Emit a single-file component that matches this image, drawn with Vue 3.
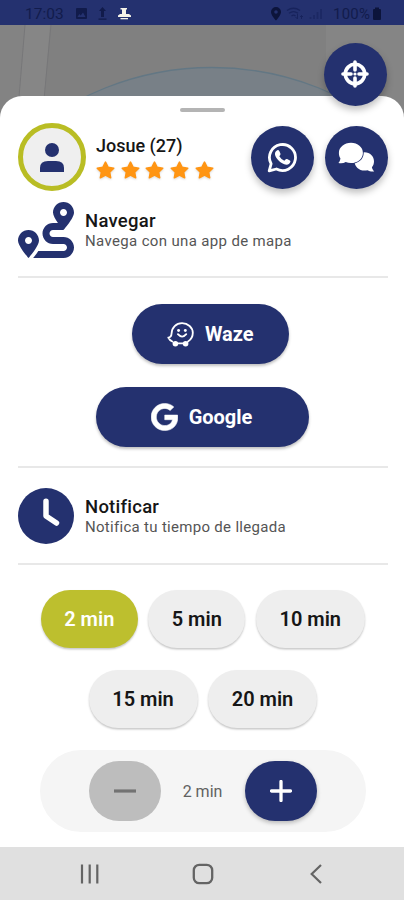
<script setup>
import { ref } from 'vue'

const presets = [[2, 5, 10], [15, 20]]
const minutes = ref(2)
</script>

<template>
  <div class="screen">
    <header class="status">
      <span class="time">17:03</span>
      <svg class="st-left" width="60" height="16" viewBox="0 0 60 16">
        <path fill="#111b4b" fill-rule="evenodd" d="M2 2h9q1 0 1 1v9q0 1-1 1H2q-1 0-1-1V3q0-1 1-1zM2.500 11h8L8 6.500 5.700 9.500 4.300 8z" />
        <path fill="#111b4b" d="M27.500 1l3.500 4h-2v6h-3V5h-2zM23.500 12.500h8v1.200h-8z" />
        <path fill="#f5f3e8" d="M45.500 2h6.500v1.500h-1V8h3l2 1.500v1.500H43V9.500L45 8h2V3.500h-1.500z" />
        <path fill="#f5f3e8" d="M45.500 12h7.500v1.300h-7.500z" />
      </svg>
      <span class="grow"></span>
      <svg class="st-right" width="56" height="16" viewBox="0 0 56 16">
        <path fill="#0c143b" fill-rule="evenodd" d="M6 1a5 5 0 0 1 5 5c0 3.500-5 8.500-5 8.500S1 9.500 1 6a5 5 0 0 1 5-5zm0 3.200a1.800 1.800 0 1 0 0 3.600 1.800 1.800 0 0 0 0-3.600z" />
        <g fill="none" stroke="#17235c" stroke-width="1.300">
          <path d="M17 4.500Q23.500 0 30 4.500M19 7.300q4.500-3.300 9 0M21.500 10q2-1.600 4 0" />
          <path d="M27.500 8v5M25.500 11l2 2M31.500 13V9.500M30 11l1.500-1.500L33 11" stroke-width="1" />
          <path d="M40.500 13v-2M44 13V9M47.500 13V6M51 13V3" stroke-width="1.800" opacity=".6" />
        </g>
      </svg>
      <span class="percent">100%</span>
      <svg class="battery" width="10" height="14" viewBox="0 0 10 14"><path fill="#0c143b" d="M3 .5h4v1.500h1q1 0 1 1V12q0 1-1 1H2q-1 0-1-1V3q0-1 1-1h1z" /></svg>
    </header>

    <div class="map">
      <svg width="404" height="96" viewBox="0 0 404 96">
        <path fill="#838383" d="M0 0h25L16 96H0z" />
        <path fill="#858585" d="M326 0h78v96h-78z" />
        <path fill="#868686" d="M25 0h25L42 96H16z" />
        <path fill="none" stroke="#777779" d="M25 0l-8 96M51 0l-9 96" />
        <circle cx="212" cy="331" r="288.500" fill="#788087" stroke="#637784" stroke-width="1.300" />
      </svg>
      <button class="round locate" aria-label="Centrar">
        <svg width="28" height="28" viewBox="0 0 28 28" fill="none" stroke="#fff">
          <circle cx="14" cy="14" r="9.700" stroke-width="3.600" />
          <path d="M14 2v8M14 18V26M2 14h8M18 14H26" stroke-width="3.600" stroke-linecap="round" />
          <circle cx="14" cy="14" r="1.600" fill="#fff" stroke="none" />
        </svg>
      </button>
    </div>

    <main class="sheet">
      <div class="handle"></div>

      <section class="profile">
        <div class="avatar">
          <svg width="24" height="29" viewBox="0 0 24 29" fill="#24316f">
            <circle cx="12" cy="7" r="7" />
            <path d="M0 29v-4q0-7 8-7h8q8 0 8 7v4z" />
          </svg>
        </div>
        <div class="who">
          <div class="name">Josue (27)</div>
          <div class="stars">
            <svg v-for="n in 5" :key="n" width="19" height="19" viewBox="0 0 24 24">
              <path fill="#ff9513" stroke="#ff9513" stroke-width="2" stroke-linejoin="round" d="M12 1.500l3.300 6.500 7.100 1.100-5.200 5 1.300 7.100L12 17.800l-6.500 3.400 1.300-7.100-5.200-5L8.700 8z" />
            </svg>
          </div>
        </div>
        <button class="round" aria-label="WhatsApp">
          <svg width="31" height="31" viewBox="0 0 31 31">
            <path fill="none" stroke="#fff" stroke-width="2.800" stroke-linejoin="round" d="M2.200 28.800l1.900-7A13 13 0 1 1 9.400 27z" />
            <path fill="#fff" d="M9.300 9q1.300-1.200 2.300-.8.700.3 1.800 3.300.3.800-.2 1.500l-.9 1.300q1.800 3.100 5 4.400l1.500-1.500q.6-.5 1.300-.2l2.800 1.400q.7.400.5 1.100-.5 3-4 3.200-4.300-.2-8.300-4.600-3.900-4.500-3-7.400.3-1 1.200-1.700z" />
          </svg>
        </button>
        <button class="round" aria-label="Chat">
          <svg width="37" height="31" viewBox="0 0 37 31">
            <path fill="#fff" d="M26.500 10.200c5.600 0 9.500 4.100 9.500 9 0 2.500-.8 4.500-2.100 6.100.4 1.600 1.100 2.800 2.300 4.200-2.800.3-4.800-.1-6.700-1.300-1 .3-2 .4-3 .4-5.500 0-10-4.200-10-9.200s4.500-9.200 10-9.200z" />
            <path fill="#fff" stroke="#24316f" stroke-width="1.600" paint-order="stroke" d="M13 .8c6.700 0 11.900 4.400 11.900 10.100S19.700 21 13 21c-1.900 0-3.700-.3-5.300-1C5.600 21.300 3.300 21.600.4 21c1.300-1.500 1.900-3 2-4.800C1.400 14.700.9 13 .9 10.900.9 5.200 6.300.8 13 .8z" />
          </svg>
        </button>
      </section>

      <section class="heading nav-heading">
        <svg width="56" height="56" viewBox="0 0 512 512" fill="#24316f">
          <path d="M416 320h-96c-17.600 0-32-14.400-32-32s14.400-32 32-32h96s96-107 96-160-43-96-96-96-96 43-96 96c0 25.500 22.200 63.400 45.300 96H320c-52.900 0-96 43.100-96 96s43.100 96 96 96h96c17.600 0 32 14.400 32 32s-14.400 32-32 32H185.500c-16 24.800-33.800 47.700-47.300 64H416c52.900 0 96-43.100 96-96s-43.100-96-96-96zm0-256c17.700 0 32 14.300 32 32s-14.300 32-32 32-32-14.300-32-32 14.300-32 32-32zM96 256c-53 0-96 43-96 96s96 160 96 160 96-107 96-160-43-96-96-96zm0 128c-17.700 0-32-14.300-32-32s14.300-32 32-32 32 14.300 32 32-14.300 32-32 32z" />
        </svg>
        <div>
          <h2>Navegar</h2>
          <p>Navega con una app de mapa</p>
        </div>
      </section>

      <section class="apps">
        <button class="app waze">
          <svg width="27" height="25" viewBox="0 0 28 26">
            <g fill="none" stroke="#fff" stroke-width="1.900" stroke-linecap="round" stroke-linejoin="round">
              <path d="M5.500 20.300Q2.700 19 1.300 16.200q3.200-.2 3.400-4.200C4.900 5.600 9.500 1.200 15.600 1.200S26.800 5.600 26.800 11.300c0 4-1.900 7.200-5 9M11.500 22.200h5" />
              <path d="M11.300 12.700q4.400 5 8.700 0" />
            </g>
            <g fill="#fff"><circle cx="12" cy="8.800" r="1.500" /><circle cx="19" cy="8.800" r="1.500" /><circle cx="8.700" cy="22.600" r="2.900" /><circle cx="19.300" cy="22.600" r="2.900" /></g>
          </svg>
          <span>Waze</span>
        </button>
        <button class="app google">
          <svg width="27" height="28" viewBox="0 0 488 512" fill="#fff" stroke="#fff" stroke-width="10">
            <path d="M488 261.800C488 403.300 391.100 504 248 504 110.800 504 0 393.200 0 256S110.800 8 248 8c66.800 0 123 24.500 166.300 64.900l-67.500 64.900C258.500 52.600 94.300 116.600 94.300 256c0 86.500 69.100 156.600 153.700 156.600 98.200 0 135-70.400 140.800-106.900H248v-85.300h236.100c2.300 12.700 3.900 24.900 3.900 41.400z" />
          </svg>
          <span>Google</span>
        </button>
      </section>

      <section class="heading notify-heading">
        <svg width="56" height="56" viewBox="0 0 512 512">
          <circle cx="256" cy="256" r="256" fill="#24316f" />
          <path d="M256 120v136l96 64" fill="none" stroke="#fff" stroke-width="50" stroke-linecap="round" stroke-linejoin="round" />
        </svg>
        <div>
          <h2>Notificar</h2>
          <p>Notifica tu tiempo de llegada</p>
        </div>
      </section>

      <section class="presets">
        <div v-for="(row, i) in presets" :key="i" class="preset-row">
          <button
            v-for="m in row" :key="m"
            class="chip" :class="{ wide: m >= 10, active: m === minutes }"
            @click="minutes = m"
          >{{ m }} min</button>
        </div>
      </section>

      <section class="stepper">
        <button class="step minus" aria-label="Menos" @click="minutes = Math.max(2, minutes - 1)">
          <svg width="22" height="22" viewBox="0 0 22 22"><path d="M0 11h22" stroke="#737373" stroke-width="3.200" /></svg>
        </button>
        <span class="value">{{ minutes }} min</span>
        <button class="step plus" aria-label="Más" @click="minutes++">
          <svg width="22" height="22" viewBox="0 0 22 22"><path d="M1.500 11h19M11 1.500v19" stroke="#fff" stroke-width="3.300" stroke-linecap="round" /></svg>
        </button>
      </section>
    </main>

    <footer class="navbar">
      <svg width="20" height="20" viewBox="0 0 20 20"><path d="M2 .5v19M9.700 .5v19M17.300 .5v19" stroke="#646464" stroke-width="2.200" /></svg>
      <svg class="home" width="22" height="22" viewBox="0 0 22 22"><rect x="1.800" y="1.800" width="18.400" height="18.400" rx="5.500" fill="none" stroke="#646464" stroke-width="2.300" /></svg>
      <svg width="12" height="20" viewBox="0 0 12 20"><path d="M11 1L1.700 10 11 19" fill="none" stroke="#646464" stroke-width="2.200" /></svg>
    </footer>
  </div>
</template>

<style>
body { margin: 0; }
</style>

<style scoped>
* { box-sizing: border-box; }
.screen {
  width: 404px;
  height: 900px;
  overflow: hidden;
  display: flex;
  flex-direction: column;
  background: #fff;
  font-family: Roboto, "Liberation Sans", sans-serif;
  color: #161616;
}
button { border: 0; padding: 0; font: inherit; color: inherit; display: flex; align-items: center; justify-content: center; }
svg { display: block; flex: none; }
.status { height: 25px; flex: none; background: #24316f; display: flex; align-items: center; padding: 3px 22px 0 25px; color: #121c4c; }
.time { width: 38px; font-size: 15.500px; white-space: nowrap; }
.st-left { margin-left: 12px; }
.grow { flex: 1; }
.st-right { margin-right: 7px; }
.percent { font-size: 15px; letter-spacing: .2px; width: 39px; white-space: nowrap; }
.battery { flex: none; }
.map { height: 71px; flex: none; background: #808080; position: relative; }
.round { width: 63px; height: 63px; flex: none; border-radius: 50%; background: #24316f; box-shadow: 0 4px 7px rgba(0, 0, 0, .25); }
.locate { position: absolute; z-index: 2; left: 323.500px; top: 17.500px; }
.sheet { position: relative; height: 751px; flex: none; background: #fff; border-radius: 22px 22px 0 0; display: flex; flex-direction: column; padding: 12px 16px 0 17.500px; }
.handle { width: 45px; height: 4px; flex: none; border-radius: 2px; background: #b4b4b4; margin-left: 162.500px; }
.profile { display: flex; height: 68px; flex: none; margin-top: 11px; align-items: center; }
.avatar { width: 68px; height: 68px; flex: none; border: 5px solid #b9bd24; border-radius: 50%; background: #efefef; display: flex; align-items: center; justify-content: center; }
.who { width: 154.500px; padding-left: 10.500px; margin-right: 11px; }
.profile .round + .round { margin-left: 11.500px; }
.name { font-size: 18px; line-height: 22px; font-weight: 500; white-space: nowrap; }
.stars { display: flex; gap: 5.700px; margin-top: 4px; }
.stars svg { filter: drop-shadow(0 1px 1px rgba(0, 0, 0, .15)); }
.heading { display: flex; align-items: center; flex: none; border-bottom: 2px solid #e8e8e8; }
.heading div { margin-left: 11.500px; }
h2 { margin: 0; font-size: 18.500px; line-height: 22px; font-weight: 500; letter-spacing: .25px; }
p { margin: 0; font-size: 15px; line-height: 18px; color: #555; white-space: nowrap; letter-spacing: .35px; }
.nav-heading { height: 87px; padding-bottom: 7px; }
.nav-heading div { padding-bottom: 1px; }
.apps { display: flex; flex-direction: column; align-items: center; gap: 23px; padding-top: 26px; height: 190px; flex: none; border-bottom: 2px solid #e8e8e8; }
.app { height: 60px; flex: none; border-radius: 30px; background: #24316f; color: #fff; font-size: 20px; font-weight: 700; box-shadow: 0 2px 3px rgba(0, 0, 0, .25); }
.waze { width: 157px; margin-left: 15px; gap: 11px; }
.google { width: 213px; gap: 10.500px; padding-right: 2px; }
.notify-heading { height: 97px; }
.notify-heading p { letter-spacing: .3px; }
.presets { display: flex; flex-direction: column; gap: 22px; padding-top: 25px; flex: none; }
.preset-row { display: flex; justify-content: center; gap: 10.500px; }
.chip { width: 97px; height: 58px; border-radius: 29px; background: #eee; font-size: 20px; font-weight: 600; box-shadow: 0 1.500px 2px rgba(0, 0, 0, .22); }
.chip.wide { width: 109px; }
.chip.active { background: #bdbf2e; color: #fff; }
.stepper { width: 326px; height: 82px; flex: none; margin: 22px 0 0 22.500px; border-radius: 41px; background: #f5f5f5; display: flex; align-items: center; justify-content: center; padding-right: 1px; }
.step { width: 72px; height: 60px; border-radius: 30px; }
.minus { background: #bdbdbd; }
.plus { background: #24316f; box-shadow: 0 2px 4px rgba(0, 0, 0, .25); }
.value { width: 84px; text-align: center; font-size: 16px; color: #616161; }
.navbar { flex: 1; background: #e0e0e0; display: flex; align-items: center; padding: 0 82px 0 80px; justify-content: space-between; }
.home { margin-right: 5px; }
</style>
